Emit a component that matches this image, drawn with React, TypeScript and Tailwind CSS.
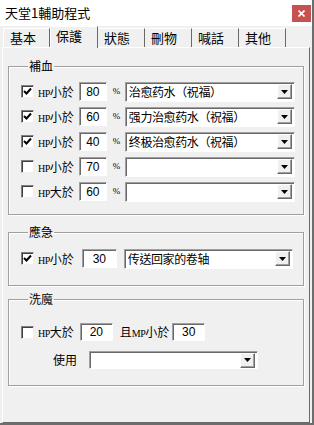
import React from "react";

const cjk = "font-['Noto_Sans_CJK_TC','Noto_Sans_CJK_SC',sans-serif]";

function Check({ on }: { on?: boolean }) {
  return (
    <div className="w-[13px] h-[13px] bg-white border border-t-[#808080] border-l-[#808080] border-b-[#f0f0f0] border-r-[#f0f0f0] shadow-[inset_1px_1px_0_#404040] flex items-center justify-center shrink-0">
      {on && (
        <svg width="9" height="9" viewBox="0 0 9 9">
          <path d="M1 4 L3.5 6.5 L8 1.5" stroke="#000" strokeWidth="2" fill="none" />
        </svg>
      )}
    </div>
  );
}

function Field({ value, className }: { value: string; className: string }) {
  return (
    <div
      className={`${className} bg-white border border-t-[#a0a0a0] border-l-[#a0a0a0] border-b-white border-r-white shadow-[inset_1px_1px_0_#696969] flex items-center justify-center text-[12px] font-['Liberation_Sans',sans-serif] shrink-0`}
    >
      {value}
    </div>
  );
}

function Combo({ text, className }: { text?: string; className: string }) {
  return (
    <div
      className={`${className} bg-white border border-t-[#a0a0a0] border-l-[#a0a0a0] border-b-white border-r-white shadow-[inset_1px_1px_0_#696969] flex items-center justify-between pl-[3px] pr-[2px] shrink-0`}
    >
      <span className={`${cjk} text-[12px] tracking-[-0.4px] leading-none`}>{text}</span>
      <div className="w-[15px] h-[15px] bg-[#f0f0f0] border border-t-white border-l-white border-b-[#696969] border-r-[#696969] shadow-[inset_-1px_-1px_0_#a0a0a0] flex items-center justify-center">
        <svg width="7" height="4" viewBox="0 0 7 4">
          <path d="M0 0 H7 L3.5 4 Z" fill="#000" />
        </svg>
      </div>
    </div>
  );
}

function Hp({ word }: { word: string }) {
  return (
    <span className="flex items-baseline shrink-0">
      <span className="font-['Liberation_Serif',serif] text-[10px] tracking-[-0.5px]">HP</span>
      <span className={`${cjk} text-[12px]`}>{word}</span>
    </span>
  );
}

function Group({ title, className, children }: { title: string; className: string; children: React.ReactNode }) {
  return (
    <fieldset className={`${className} border border-[#a0a0a0] shadow-[1px_1px_0_white,inset_1px_1px_0_white] ml-[5px] w-[296px]`}>
      <legend className={`${cjk} text-[12px] leading-[16px] ml-[7px] px-[1px]`}>{title}</legend>
      {children}
    </fieldset>
  );
}

const rows = [
  { on: true, word: "小於", v: "80", item: "治愈药水（祝福）" },
  { on: true, word: "小於", v: "60", item: "强力治愈药水（祝福）" },
  { on: true, word: "小於", v: "40", item: "终极治愈药水（祝福）" },
  { on: false, word: "小於", v: "70", item: "" },
  { on: false, word: "大於", v: "60", item: "" },
];

const tabs = ["基本", "保護", "狀態", "刪物", "喊話", "其他"];

export default function App() {
  return (
    <div className="w-[314px] h-[425px] bg-[#f0f0f0] flex flex-col text-black border-r-2 border-b-2 border-[#6d6d6d] overflow-hidden">
      <div className="h-[26px] bg-white flex items-center justify-between pl-[5px] pr-[1px] shrink-0">
        <span className={`${cjk} text-[13px]`}>天堂1輔助程式</span>
        <div className="w-[19px] h-[17px] bg-[#c75050] flex items-center justify-center">
          <svg width="7" height="7" viewBox="0 0 7 7">
            <path d="M0.5 0.5 L6.5 6.5 M6.5 0.5 L0.5 6.5" stroke="#fff" strokeWidth="1.6" />
          </svg>
        </div>
      </div>
      <div className="h-[21px] flex items-end pl-[3px] shrink-0">
        {tabs.map((t, i) => (
          <div
            key={t}
            className={
              i === 1
                ? `${cjk} text-[13px] h-[22px] w-[48px] pl-[5px] pb-[4px] flex items-center bg-[#f0f0f0] border-t border-l border-white border-r border-r-[#696969] -mb-[1px] relative z-10`
                : `${cjk} text-[13px] h-[19px] w-[47px] pl-[6px] pb-[1px] flex items-center border-t border-white border-r border-r-[#696969] ${i === 0 ? "border-l" : ""}`
            }
          >
            {t}
          </div>
        ))}
      </div>
      <div className="flex-1 mx-[2px] border border-t-white border-l-white border-r-[#696969] border-b-[#696969] flex flex-col pt-[10px]">
        <Group title="補血" className="pl-[12px] pb-[13px] pt-[8px]">
          <div className="flex flex-col gap-[6px]">
            {rows.map((r, i) => (
              <div key={i} className="flex items-center h-[19px]">
                <Check on={r.on} />
                <span className="w-[4px]" />
                <Hp word={r.word} />
                <Field value={r.v} className="w-[28px] h-[19px] ml-[5px]" />
                <span className="font-['Liberation_Serif',serif] text-[9px] ml-[6px] w-[12px]">%</span>
                <Combo text={r.item} className="w-[170px] h-[20px]" />
              </div>
            ))}
          </div>
        </Group>
        <Group title="應急" className="mt-[9px] pl-[12px] pb-[17px] pt-[1px]">
          <div className="flex items-center h-[19px] mt-[8px]">
            <Check on />
            <span className="w-[4px]" />
            <Hp word="小於" />
            <Field value="30" className="w-[35px] h-[19px] ml-[8px]" />
            <Combo text="传送回家的卷轴" className="w-[169px] h-[20px] ml-[7px]" />
          </div>
        </Group>
        <Group title="洗魔" className="mt-[5px] pl-[12px] pb-[16px] pt-[1px]">
          <div className="flex items-center h-[18px] mt-[15px]">
            <Check />
            <span className="w-[4px]" />
            <Hp word="大於" />
            <Field value="20" className="w-[33px] h-[18px] ml-[6px]" />
            <span className="flex items-baseline ml-[7px]">
              <span className={`${cjk} text-[12px]`}>且</span>
              <span className="font-['Liberation_Serif',serif] text-[10px] tracking-[-0.5px]">MP</span>
              <span className={`${cjk} text-[12px]`}>小於</span>
            </span>
            <Field value="30" className="w-[33px] h-[18px] ml-[3px]" />
          </div>
          <div className="flex items-center h-[18px] mt-[10px] pl-[32px]">
            <span className={`${cjk} text-[12px]`}>使用</span>
            <Combo className="w-[169px] h-[18px] ml-[12px]" />
          </div>
        </Group>
      </div>
    </div>
  );
}
